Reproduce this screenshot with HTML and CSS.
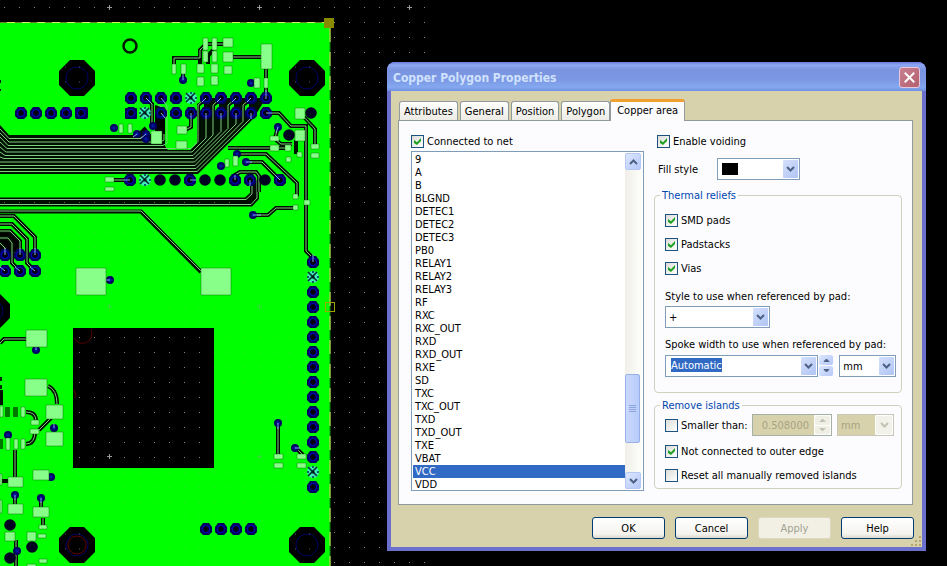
FILE: index.html
```html
<!DOCTYPE html>
<html lang="en">
<head>
<meta charset="utf-8">
<title>Copper Polygon Properties</title>
<link rel="stylesheet" href="styles.css">
</head>
<body>
<svg class="board" aria-hidden="true">
  <defs>
    <pattern id="grid" x="4" y="7" width="15" height="15" patternUnits="userSpaceOnUse"><rect width="1" height="1" fill="#858585"/></pattern>
    <pattern id="gridgreen" x="4" y="7" width="15" height="15" patternUnits="userSpaceOnUse"><rect width="1" height="1" fill="#2be02b"/></pattern>
    <g id="cross"><path d="M-2 .5H3M.5 -2V3" stroke="#999"/></g>
    <g id="oct">
      <path d="M-18-7L-7-18H7L18-7V7L7 18H-7L-18 7Z" fill="#000"/>
      <circle r="11" fill="none" stroke="#000068"/>
      <path d="M-12-11h1M2-11h1M-12 4h1M2 4h1" stroke="#557"/>
    </g>
    <g id="pad">
      <path d="M-6-2L-3-6H3L6-2V3L3 6H-3L-6 3Z" fill="#000058"/>
      <circle r="3.6" fill="#000014" stroke="#0000b0" stroke-width="1.3"/>
      <rect x="-1" y="-1" width="2" height="2" fill="#000"/>
    </g>
    <g id="star">
      <circle r="6" fill="#40e8b8"/>
      <path d="M-5-5L4 4M4-5L-5 4" stroke="#003030" stroke-width="1.6"/>
      <path d="M0-6V-4M0 6V4M-6 0H-4M6 0H4" stroke="#0a6060" stroke-width="2"/>
      <circle r="1.6" fill="#001818"/>
    </g>
    <g id="via"><circle r="4" fill="#000060"/><circle r="1.8" fill="#0018a0"/></g>
    <g id="blob"><circle r="5.8" fill="#000020"/></g>
  </defs>
  <rect width="426" height="100%" fill="url(#grid)"/>
  <use href="#cross" x="109" y="7"/><use href="#cross" x="259" y="7"/><use href="#cross" x="409" y="7"/>
  <rect y="23" width="330" height="100%" fill="#0f0"/>
  <rect y="23" width="330" height="100%" fill="url(#gridgreen)"/>
  <path d="M0 22.5H330" stroke="#d8f060"/>
  <path d="M0 22.5H330" stroke="#708030" stroke-dasharray="7 8"/>
  <path d="M330 23V600" stroke="#109010" stroke-width="1"/>
  <path d="M330 28V600" stroke="#e8f060" stroke-dasharray="14 10"/>
  <rect x="324" y="18" width="10" height="10" fill="#8a8a00"/>
  <rect x="325.500" y="302.500" width="9" height="9" fill="none" stroke="#98a800"/>
  <circle cx="130" cy="46" r="6.500" fill="#0f0" stroke="#001800" stroke-width="2.500"/>

  <rect x="73" y="328" width="141" height="140" fill="#000"/>
  <rect x="73" y="328" width="141" height="140" fill="url(#grid)"/>
  <path d="M74 338a9 9 0 0 0 17-8M74 390q3 4 1 8" fill="none" stroke="#500"/>
  <use href="#cross" x="109" y="456"/>
  <g opacity=".35"><use href="#cross" x="109" y="306"/><use href="#cross" x="259" y="306"/><use href="#cross" x="259" y="456"/></g>

  <use href="#oct" x="77" y="78"/><use href="#oct" x="307" y="78"/><use href="#oct" x="-8" y="311"/>
  <use href="#oct" x="77" y="545"/><use href="#oct" x="307" y="545"/>
  <circle cx="77" cy="545" r="9" fill="none" stroke="#600"/>

  <!-- bus -->
  <path d="M0 125L9 135H146L155 133V105L165 108V146L168 150H190L197 143V104L206 98H266L253 119L198 174H0Z" fill="#001000"/>
  <path d="M169 104V146L170 150H190L197 143V104Z" fill="#0f0"/>
  <path class="thin" d="M0 129L9 138.500H140L146 134M0 133L9 142H160L164 140V108L158 105M0 137L8 145.500H163L167 143V106L161 98
    M0 142L7 148.500H191L198 141.500V105L206 98M0 147L6 152H192L206 138V113M0 152L5 155.500H193L213 135V105L221 98M0 157L4 158.500H194L221 131.500V113
    M0 162H194.500L228 128.500V105L236 98M0 165.500H195L236 124V113M0 168.500H196L243 121.500V105L251 98M0 171.500H197L251 118V113"/>
  <path d="M200 106v10l4-5v-8zM215 106v10l4-5v-8zM230 106v10l4-5v-8zM245 106v10l4-5v-8z" fill="#0f0"/>
  <path d="M155 120h10v14h-10zM156 112h9v8h-9z" fill="#000"/>

  <!-- second bus under row C -->
  <path d="M0 197.500H245L250 193V180H259V199L252 206.500H0Z" fill="#000c00"/>
  <path class="thin" d="M0 199.500H246L252 194V182M0 204.500H251L257 198V180"/>
  <path class="dim" d="M4 202.500H230" stroke-dasharray="1 14"/>
  <path class="gap" d="M0 211.500H141L201 272"/><path class="thin" d="M0 211H141L201 271"/>

  <!-- left fan -->
  <path d="M0 232L12 231L20 240V252H0Z" fill="#000"/>
  <path class="gap" d="M0 216H14L35 237V255M0 224H12L27 239V263L35 271M0 231H10L20 241V255M0 238H8L12 243V263L20 271M0 243L5 248V255"/>
  <path class="thin" d="M0 216H14L35 237V255M0 224H12L27 239V263L35 271M0 231H10L20 241V255M0 238H8L12 243V263L20 271M0 243L5 248V255"/>

  <!-- single tracks -->
  <g class="gap">
    <path d="M174 70V58H200V50L206 44H228M200 57V72M228 57H262M213 50l-5 6v8M183 72v6M266 68v30M191 113V127L183 131M266 113H279L291 126H306V251L313 258V261M304 117L315 129V146M278 127L275 138M276 140L281 144H292M296 140V154M228 148H286M237 154H266L297 183V196M246 162H262L280 180M235 180V175L240 172H256L259 176V192M256 215H268L276 208H296M127 180H112M146 98L152 104V127M140 134L146 128"/>
    <path d="M278 423V455M296 448L303 455M28 339H4L0 343M48 386Q57 390 57 404M26 412Q36 412 36 421M35 431Q35 444 26 444M39 430L52 417M15 450V480M0 481H10M41 498V510M43 518V528M15 496V505M16 540V566M1 390V405"/>
  </g>
  <g class="thin">
    <path d="M174 70V58H200V50L206 44H228M228 57H262M266 68v30M191 113V127L183 131M266 113H279L291 126H306V251L313 258V261M304 117L315 129V146M278 127L275 138M276 140L281 144H292M228 148H286M237 154H266L297 183V196M246 162H262L280 180M235 180V175L240 172H256L259 176V192M256 215H268L276 208H296M127 180H112M146 98L152 104V127"/>
    <path d="M278 423V455M296 448L303 455M28 339H4L0 343M48 386Q57 390 57 404M26 412Q36 412 36 421M35 431Q35 444 26 444M39 430L52 417M15 450V480M41 498V510M43 518V528M15 496V505M16 540V566"/>
  </g>

  <!-- through-hole rows -->
  <g>
    <use href="#pad" x="21" y="113"/><use href="#pad" x="36" y="113"/><use href="#pad" x="51" y="113"/><use href="#pad" x="66" y="113"/>
    <rect x="75" y="107" width="13" height="12" rx="2" fill="#000050"/><use href="#pad" x="81" y="113"/>
    <use href="#pad" x="131" y="98"/><use href="#pad" x="146" y="98"/><use href="#pad" x="161" y="98"/><use href="#pad" x="176" y="98"/><use href="#star" x="191" y="98"/><use href="#pad" x="206" y="98"/><use href="#pad" x="221" y="98"/><use href="#pad" x="236" y="98"/><use href="#pad" x="251" y="98"/><use href="#pad" x="266" y="98"/>
    <rect x="125" y="108" width="12" height="11" rx="1" fill="#000050"/><use href="#pad" x="131" y="113"/><use href="#star" x="145" y="113"/><use href="#pad" x="161" y="113"/><use href="#pad" x="176" y="113"/><use href="#pad" x="191" y="113"/><use href="#pad" x="206" y="113"/><use href="#pad" x="221" y="113"/><use href="#pad" x="236" y="113"/><use href="#pad" x="251" y="113"/><use href="#pad" x="266" y="113"/>
    <use href="#pad" x="130" y="180"/><use href="#star" x="145" y="180"/><use href="#blob" x="160" y="180"/><use href="#blob" x="175" y="180"/><use href="#pad" x="190" y="180"/><use href="#blob" x="205" y="180"/><use href="#blob" x="220" y="180"/><use href="#pad" x="235" y="180"/><use href="#pad" x="250" y="180"/><use href="#blob" x="265" y="180"/><use href="#pad" x="280" y="180"/>
    <use href="#pad" x="5" y="255"/><use href="#pad" x="20" y="255"/><use href="#pad" x="35" y="255"/><use href="#pad" x="5" y="271"/><use href="#pad" x="20" y="271"/><use href="#pad" x="35" y="271"/>
    <use href="#pad" x="313" y="262"/><use href="#star" x="313" y="277"/><use href="#pad" x="313" y="292"/><use href="#pad" x="313" y="307"/><use href="#pad" x="313" y="322"/><use href="#pad" x="313" y="337"/><use href="#pad" x="313" y="352"/><use href="#pad" x="313" y="367"/><use href="#pad" x="313" y="382"/><use href="#pad" x="313" y="397"/><use href="#pad" x="313" y="412"/><use href="#pad" x="313" y="427"/><use href="#pad" x="313" y="442"/><use href="#pad" x="313" y="457"/><use href="#star" x="313" y="472"/><use href="#pad" x="313" y="487"/>
    <use href="#pad" x="206" y="529"/><use href="#pad" x="221" y="529"/><use href="#pad" x="236" y="529"/><use href="#pad" x="251" y="529"/>
  </g>
  <path class="blue" d="M146 98l5 5M161 98l4 5M206 98l-4 4M221 98l-4 4M236 98l-4 4M251 98l-4 4M266 90v9M266 113h6M191 113v6M161 113l4 5M206 113v6M221 113v6M236 113v6M251 113v6M190 180h6M235 180v-5M280 180l-5-5M250 180v6M35 255v-7M20 255v-7M5 255v-7M35 271l-5-4M20 271l-5-4M5 271l-5-4M313 262v-8M130 180h-6"/>

  <!-- vias -->
  <use href="#blob" x="311" y="113"/><use href="#blob" x="289" y="135"/><use href="#blob" x="10" y="525"/><use href="#blob" x="10" y="558"/><use href="#blob" x="32" y="547"/>
  <use href="#via" x="183" y="80"/><use href="#via" x="251" y="83"/><use href="#via" x="278" y="127"/><use href="#via" x="237" y="154"/><use href="#via" x="221" y="166"/><use href="#via" x="246" y="162"/><use href="#via" x="253" y="215"/><use href="#via" x="153" y="126"/><use href="#via" x="114" y="128"/><use href="#via" x="137" y="134"/><use href="#via" x="146" y="134"/><use href="#via" x="146" y="139"/><use href="#via" x="110" y="280"/><use href="#via" x="36" y="350"/><use href="#via" x="8" y="435"/><use href="#via" x="54" y="428"/><use href="#via" x="51" y="477"/><use href="#via" x="15" y="495"/><use href="#via" x="41" y="498"/><use href="#via" x="17" y="551"/><use href="#via" x="278" y="423"/><use href="#via" x="295" y="448"/>
  <path class="blue" d="M183 80v-6M278 127l-2 6M246 162h6M253 215h8M278 423v6M295 448h5M41 498v5M15 495v5M36 350v-5M137 134l-4 3M146 134l-6 5M110 280h-4M54 428v-4"/>

  <!-- surface-mount pads -->
  <g class="smd">
    <path d="M203 38h5v12h-5zM212 38h5v12h-5zM223 38h10v9h-10zM203 51h5v11h-5zM212 51h5v11h-5zM223 52h10v10h-10zM261 44h11v25h-11zM172 64h4v10h-4zM181 64h5v10h-5zM197 64h7v9h-7zM197 77h7v9h-7zM211 64h7v9h-7zM211 76h7v9h-7zM224 66h8v8h-8zM254 78h6v10h-6zM264 78h4v10h-4z"/>
    <path d="M119 124h4v9h-4zM128 124h4v9h-4zM151 131h11v13h-11zM177 126h10v8h-10zM176 141h11v8h-11zM295 108h10v11h-10zM295 130h10v11h-10zM270 136h9v5h-9zM270 145h9v6h-9zM285 145h6v6h-6zM286 157h5v5h-5zM297 152h5v5h-5zM311 144h8v5h-8zM311 153h8v5h-8zM225 159h4v8h-4zM233 156h5v10h-5zM105 177h9v5h-9zM105 187h9v4h-9zM293 194h5v5h-5zM293 205h5v5h-5zM304 200h6v5h-6z"/>
    <path d="M76 268h30v27h-30zM201 268h30v27h-30zM26 330h21v17h-21zM25 379h22v17h-22zM46 405h17v14h-17zM46 432h17v14h-17zM0 406h3v11h-3zM21 407h4v10h-4zM31 420h8v5h-8zM30 429h9v5h-9zM6 438h4v12h-4zM14 439h4v10h-4zM21 439h4v10h-4zM0 474h2v11h-2zM8 477h15v10h-15zM33 470h16v10h-16zM0 500h2v13h-2zM8 504h15v10h-15zM33 507h16v10h-16zM39 525h8v4h-8zM38 534h8v4h-8zM5 532h10v9h-10zM27 532h9v9h-9zM39 559h8v4h-8zM27 564h9v4h-9zM274 454h9v5h-9zM274 463h9v5h-9zM297 454h9v5h-9zM297 463h9v5h-9z"/>
  </g>
  <path d="M5 407h5v10h-5zM13 407h5v10h-5zM0 439h3v10h-3z" fill="#007800"/>
  <path d="M0 80h1v3h-1zM0 89h1v2h-1zM0 377h2v4h-2zM0 385h2v4h-2z" fill="#002800"/>
</svg>

<form class="dialog" aria-labelledby="dlg-title">
  <header class="titlebar">
    <h1 id="dlg-title">Copper Polygon Properties</h1>
    <button type="button" class="close" aria-label="Close"><svg viewBox="0 0 20 20"><path d="M5 5L15 15M15 5L5 15"/></svg></button>
  </header>
  <div class="client">
    <nav class="tabs">
      <button type="button">Attributes</button>
      <button type="button">General</button>
      <button type="button">Position</button>
      <button type="button">Polygon</button>
      <button type="button" class="active">Copper area</button>
    </nav>
    <div class="panel">
      <section class="nets">
        <label class="check"><input type="checkbox" checked>Connected to net</label>
        <div class="listbox">
          <select size="26" aria-label="Nets">
            <option>9</option><option>A</option><option>B</option><option>BLGND</option><option>DETEC1</option><option>DETEC2</option><option>DETEC3</option><option>PB0</option><option>RELAY1</option><option>RELAY2</option><option>RELAY3</option><option>RF</option><option>RXC</option><option>RXC_OUT</option><option>RXD</option><option>RXD_OUT</option><option>RXE</option><option>SD</option><option>TXC</option><option>TXC_OUT</option><option>TXD</option><option>TXD_OUT</option><option>TXE</option><option>VBAT</option><option selected>VCC</option><option>VDD</option>
          </select>
          <div class="scroll">
            <button type="button" class="arrow" aria-label="Scroll up"><svg viewBox="0 0 9 6"><path d="M1 5L4.500 1.500L8 5"/></svg></button>
            <div class="track-before"></div>
            <div class="thumb"><i></i><i></i><i></i><i></i></div>
            <div class="track-after"></div>
            <button type="button" class="arrow" aria-label="Scroll down"><svg viewBox="0 0 9 6"><path d="M1 1L4.500 4.500L8 1"/></svg></button>
          </div>
        </div>
      </section>
      <section class="options">
        <label class="check voiding"><input type="checkbox" checked>Enable voiding</label>
        <div class="row fill">
          <label for="fill">Fill style</label>
          <span class="combo combo-fill"><select id="fill"><option aria-label="Solid"></option></select><b class="swatch"></b><span class="drop"><svg viewBox="0 0 9 6"><path d="M1 1L4.500 4.500L8 1"/></svg></span></span>
        </div>
        <fieldset class="thermal">
          <legend>Thermal reliefs</legend>
          <label class="check"><input type="checkbox" checked>SMD pads</label>
          <label class="check"><input type="checkbox" checked>Padstacks</label>
          <label class="check"><input type="checkbox" checked>Vias</label>
          <label class="caption" for="style">Style to use when referenced by pad:</label>
          <span class="combo combo-style"><select id="style"><option>+</option></select><span class="drop"><svg viewBox="0 0 9 6"><path d="M1 1L4.500 4.500L8 1"/></svg></span></span>
          <label class="caption" for="spoke">Spoke width to use when referenced by pad:</label>
          <div class="row spoke">
            <span class="combo combo-spoke"><input id="spoke" type="text" value="Automatic"><span class="drop"><svg viewBox="0 0 9 6"><path d="M1 1L4.500 4.500L8 1"/></svg></span></span>
            <span class="spin"><button type="button" aria-label="Increase"><svg viewBox="0 0 9 6"><path d="M2 4.500L4.500 2L7 4.500Z"/></svg></button><button type="button" aria-label="Decrease"><svg viewBox="0 0 9 6"><path d="M2 1.500L4.500 4L7 1.500Z"/></svg></button></span>
            <span class="combo combo-unit"><select aria-label="Spoke width unit"><option>mm</option></select><span class="drop"><svg viewBox="0 0 9 6"><path d="M1 1L4.500 4.500L8 1"/></svg></span></span>
          </div>
        </fieldset>
        <fieldset class="islands">
          <legend>Remove islands</legend>
          <div class="row smaller">
            <label class="check"><input type="checkbox">Smaller than:</label>
            <span class="number"><input type="text" value="0.508000" aria-label="Minimum island size" disabled><span class="spin"><button type="button" aria-label="Increase size" disabled><svg viewBox="0 0 9 6"><path d="M2 4.500L4.500 2L7 4.500Z"/></svg></button><button type="button" aria-label="Decrease size" disabled><svg viewBox="0 0 9 6"><path d="M2 1.500L4.500 4L7 1.500Z"/></svg></button></span></span>
            <span class="combo combo-unit off"><select aria-label="Island size unit" disabled><option>mm</option></select><span class="drop"><svg viewBox="0 0 9 6"><path d="M1 1L4.500 4.500L8 1"/></svg></span></span>
          </div>
          <label class="check"><input type="checkbox" checked>Not connected to outer edge</label>
          <label class="check"><input type="checkbox">Reset all manually removed islands</label>
        </fieldset>
      </section>
    </div>
    <footer class="actions">
      <button type="button">OK</button>
      <button type="button">Cancel</button>
      <button type="button" disabled>Apply</button>
      <button type="button">Help</button>
    </footer>
    <svg class="grip" viewBox="0 0 12 12" aria-hidden="true"><path d="M9 1h2v2h-2zM5 5h2v2h-2zM9 5h2v2h-2zM1 9h2v2h-2zM5 9h2v2h-2zM9 9h2v2h-2z"/></svg>
  </div>
</form>
</body>
</html>
```
FILE: styles.css
```css
* { box-sizing: border-box; }

body {
  margin: 0;
  min-height: 100vh;
  background: #000;
  overflow: hidden;
  color: #000;
  font: 11px/13px "DejaVu Sans Condensed", Tahoma, "Noto Sans", sans-serif;
}

button, input, select { font: inherit; color: inherit; margin: 0; }

/* Board canvas */
.board { position: absolute; inset: 0; width: 100%; height: 100%; }
.board .gap { fill: none; stroke: #001000; stroke-width: 4; }
.board .thin { fill: none; stroke: #7ccc7c; stroke-width: 1; }
.board .dim { fill: none; stroke: #575; }
.board .blue { fill: none; stroke: #88a8f0; stroke-width: 1; }
.board .smd path { fill: #88ff88; stroke: #005800; stroke-width: 1; stroke-opacity: .4; }

/* Window */
.dialog {
  position: absolute;
  left: 387px;
  right: 21px;
  top: 62px;
  border: 4px solid #6a70cc;
  border-top: 0;
  border-radius: 8px 8px 0 0;
  background: #d8d2ac;
}
.titlebar {
  display: flex;
  align-items: center;
  justify-content: space-between;
  height: 29px;
  margin: 0 -4px;
  padding: 2px 6px 0;
  border-radius: 8px 8px 0 0;
  background: linear-gradient(#6c7cd8 0, #8ea8f4 3px, #7a94e0 8px, #7c98e4 18px, #84a8f0 25px, #7090e0 100%);
}
.titlebar h1 {
  margin: 0;
  color: #d0e2fc;
  font: bold 12px/16px "DejaVu Sans Condensed", "Trebuchet MS", sans-serif;
}
.close {
  width: 21px;
  height: 21px;
  padding: 0;
  border: 1px solid #e8c8dc;
  border-radius: 3px;
  background: linear-gradient(135deg, #c88090, #b46070);
}
.close svg { display: block; width: 19px; height: 19px; fill: none; stroke: #fff; stroke-width: 2; }

.client { position: relative; padding: 8px 9px 8px 7px; }
.tabs { display: flex; align-items: flex-end; gap: 2px; padding-left: 1px; }
.tabs button {
  height: 19px;
  padding: 0 4px;
  border: 1px solid #919b9c;
  border-bottom: 0;
  border-radius: 3px 3px 0 0;
  background: linear-gradient(#fff, #ecebe4);
}
.tabs .active {
  position: relative;
  height: 22px;
  margin: 0 0 -1px -2px;
  padding: 0 6px 3px;
  border-top: 3px solid #f0a030;
  background: #fcfcfe;
}
.panel {
  display: grid;
  grid-template-columns: 233px 1fr;
  gap: 10px;
  padding: 14px 10px 13px 12px;
  border: 1px solid #919b9c;
  background: #fcfcfe;
}

.check { display: flex; align-items: center; gap: 3px; height: 13px; white-space: nowrap; }
.check input {
  appearance: none;
  width: 13px;
  height: 13px;
  border: 1px solid #1c5180;
  background: linear-gradient(135deg, #dcdcd7, #fff);
}
.check input:checked::before {
  content: "";
  display: block;
  width: 7px;
  height: 7px;
  margin: 2px;
  background: #21a121;
  clip-path: polygon(0 29%, 43% 60%, 100% 0, 100% 43%, 43% 100%, 0 72%);
}

/* Net list */
.listbox {
  display: flex;
  height: 340px;
  margin-top: 3px;
  padding: 1px;
  border: 1px solid #7f9db9;
  background: #fff;
}
.listbox select {
  flex: 1;
  appearance: none;
  height: 336px;
  padding: 0;
  border: 0;
  border-radius: 0;
  outline: 0;
  background: #fff;
  overflow: hidden;
  scrollbar-width: none;
}
.listbox option { height: 13px; min-height: 13px; padding: 0 2px; line-height: 13px; }
.listbox option:checked { color: #fff; background: #316ac5 linear-gradient(#316ac5, #316ac5); }
.scroll { display: flex; flex-direction: column; width: 17px; background: linear-gradient(90deg, #f0efe8, #fefefc); }
.arrow {
  flex: none;
  width: 16px;
  height: 17px;
  padding: 0;
  border: 1px solid #b4c8f6;
  border-radius: 2px;
  background: linear-gradient(135deg, #dce6fe, #b4c8f8);
}
.arrow svg { display: block; width: 9px; height: 6px; margin: auto; fill: none; stroke: #4d6185; stroke-width: 2; }
.track-before { flex: 205; }
.track-after { flex: 29; }
.thumb {
  display: flex;
  flex-direction: column;
  align-items: center;
  justify-content: center;
  gap: 1px;
  width: 15px;
  height: 69px;
  border: 1px solid #98b0e8;
  border-radius: 2px;
  background: linear-gradient(90deg, #cad8fe, #b8ccfa);
}
.thumb i { width: 7px; height: 1px; background: #8ca4e0; }

/* Combos and spinners */
.row { display: flex; }
.combo { position: relative; display: block; height: 22px; border: 1px solid #7f9db9; background: #fff; }
.combo select, .combo input {
  display: block;
  appearance: none;
  width: 100%;
  height: 20px;
  padding: 0 20px 0 3px;
  border: 0;
  border-radius: 0;
  background: transparent;
}
.drop {
  position: absolute;
  top: 1px;
  right: 1px;
  bottom: 1px;
  display: flex;
  align-items: center;
  justify-content: center;
  width: 15px;
  border-radius: 1px;
  background: linear-gradient(135deg, #d4e0fc, #b0c4f4);
  pointer-events: none;
}
.drop svg { width: 9px; height: 6px; fill: none; stroke: #4d6185; stroke-width: 2; }
.swatch { position: absolute; left: 4px; top: 4px; width: 16px; height: 12px; background: #000; pointer-events: none; }
.combo-fill { width: 83px; }
.combo-style { width: 105px; }
.combo-spoke { width: 154px; padding: 2px 0 4px 5px; }
.combo-spoke input { width: 51px; height: 14px; padding: 0; color: #fff; background: #316ac5; }
.combo-unit { width: 57px; }
.spin { display: flex; flex-direction: column; gap: 1px; width: 14px; height: 21px; }
.spin button {
  flex: 1;
  min-height: 0;
  padding: 0;
  border: 0;
  border-radius: 2px;
  background: linear-gradient(135deg, #dce6fe, #b4c8f8);
}
.spin svg { display: block; width: 9px; height: 6px; margin: auto; fill: #4d6185; stroke: #4d6185; }

.options { min-width: 0; }
.voiding { margin-left: 3px; }
.fill { align-items: center; gap: 10px; margin: 10px 0 9px 4px; }
.fill label { width: 49px; white-space: nowrap; }
fieldset {
  min-width: 0;
  margin: 0;
  padding: 0 5px 0 10px;
  border: 1px solid #d0d0bf;
  border-radius: 4px;
}
legend { margin-left: -5px; padding: 0 2px; color: #0046b0; }
.thermal { padding-top: 12px; padding-bottom: 15px; }
.thermal .check { margin-bottom: 11px; }
.thermal .caption { display: block; margin: 15px 0 3px; white-space: nowrap; }
.thermal .combo-style + .caption { margin: 10px 0 4px; }
.spoke .spin { margin: 0 6px 0 1px; }
.islands { margin-top: 6px; padding-top: 2px; padding-bottom: 6px; }
.smaller { align-items: center; margin-bottom: 9px; }
.smaller .check { width: 87px; }
.islands > .check + .check { margin-top: 11px; }
.number {
  display: flex;
  width: 80px;
  height: 22px;
  margin-right: 5px;
  border: 1px solid #a4b0a8;
  background: #d8d2ac;
}
.number input { flex: 1; min-width: 0; padding: 0 5px 0 0; border: 0; background: none; color: #a8a283; text-align: right; }
.number .spin { width: 17px; height: 20px; padding: 1px; background: #fcfcf8; }
.number .spin button { background: #f0efe6; }
.number .spin svg { fill: #c4c2b2; stroke: #c4c2b2; }
.off { border-color: #c9c7ba; background: #d8d2ac; }
.off select { color: #a8a283; opacity: 1; }
.off .drop { top: 0; right: 0; bottom: 0; width: 18px; border: 1px solid #fff; background: #f2f1ea; }
.off .drop svg { stroke: #c4c2b2; }

.actions { display: flex; justify-content: flex-end; gap: 10px; margin: 12px -1px 0 0; }
.actions button {
  width: 73px;
  height: 22px;
  padding: 0;
  border: 1px solid #003c74;
  border-radius: 3px;
  background: linear-gradient(#fff, #f4f3ee 80%, #dcd8cc);
}
.actions button:disabled { color: #a1a192; border-color: #dcd9c0; background: #f2f0e4; }
.grip { position: absolute; right: 0; bottom: 0; width: 12px; height: 12px; fill: #b8a468; }
```
